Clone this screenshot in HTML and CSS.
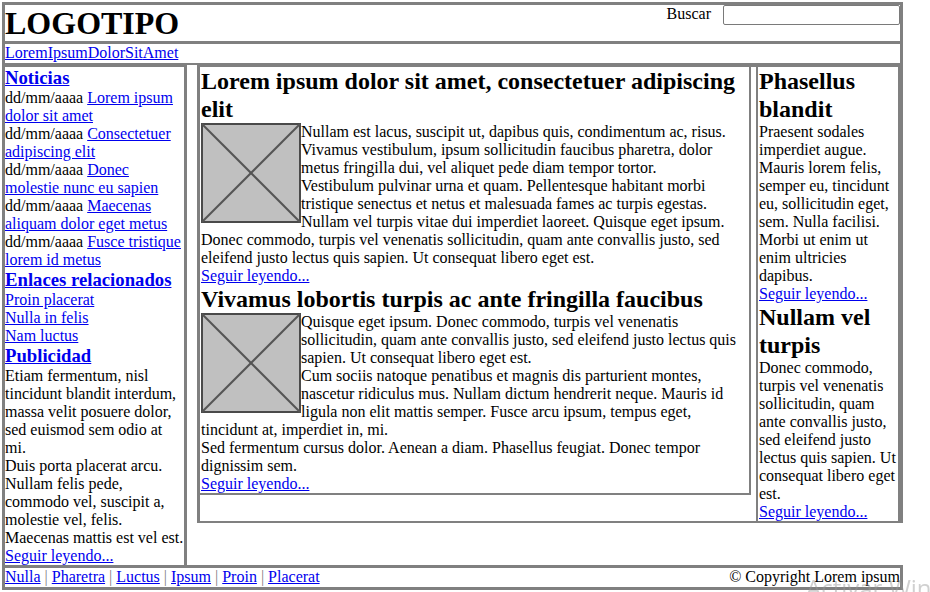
FILE: index.html
```html
<!DOCTYPE html>
<html lang="es">
<head>
    <meta charset="UTF-8">
    <meta name="viewport" content="width=device-width, initial-scale=1.0">
    <title>Logotipo</title>
    <link rel="stylesheet" href="styles.css">
</head>
<body>
    <div class="page">
        <div class="header">
            <h1>LOGOTIPO</h1>
            <div class="search">
                <label for="buscar">Buscar</label>
                <input type="text" id="buscar" name="buscar">
            </div>
        </div>
        <div class="nav"><a href="#">Lorem</a><a href="#">Ipsum</a><a href="#">Dolor</a><a href="#">Sit</a><a href="#">Amet</a></div>

        <div class="main">
            <!-- columna izquierda -->
            <div class="sidebar">
                <h3><a href="#">Noticias</a></h3>
                <div>dd/mm/aaaa <a href="#">Lorem ipsum dolor sit amet</a></div>
                <div>dd/mm/aaaa <a href="#">Consectetuer adipiscing elit</a></div>
                <div>dd/mm/aaaa <a href="#">Donec molestie nunc eu sapien</a></div>
                <div>dd/mm/aaaa <a href="#">Maecenas aliquam dolor eget metus</a></div>
                <div>dd/mm/aaaa <a href="#">Fusce tristique lorem id metus</a></div>

                <h3><a href="#">Enlaces relacionados</a></h3>
                <div><a href="#">Proin placerat</a></div>
                <div><a href="#">Nulla in felis</a></div>
                <div><a href="#">Nam luctus</a></div>

                <h3><a href="#">Publicidad</a></h3>
                <p>Etiam fermentum, nisl tincidunt blandit interdum, massa velit posuere dolor, sed euismod sem odio at mi.</p>
                <p>Duis porta placerat arcu. Nullam felis pede, commodo vel, suscipit a, molestie vel, felis. Maecenas mattis est vel est.</p>
                <a href="#">Seguir leyendo...</a>
            </div>

            <!-- contenido -->
            <div class="content">
                <div class="articles">
                    <div class="article">
                        <h2>Lorem ipsum dolor sit amet, consectetuer adipiscing elit</h2>
                        <svg class="thumb" width="100" height="100" viewBox="0 0 100 100">
                            <rect x="1" y="1" width="98" height="98" fill="#c0c0c0" stroke="#4a4a4a" stroke-width="2"/>
                            <line x1="1" y1="1" x2="99" y2="99" stroke="#555" stroke-width="2"/>
                            <line x1="99" y1="1" x2="1" y2="99" stroke="#555" stroke-width="2"/>
                        </svg>
                        <p>Nullam est lacus, suscipit ut, dapibus quis, condimentum ac, risus. Vivamus vestibulum, ipsum sollicitudin faucibus pharetra, dolor metus fringilla dui, vel aliquet pede diam tempor tortor.<br>Vestibulum pulvinar urna et quam. Pellentesque habitant morbi tristique senectus et netus et malesuada fames ac turpis egestas. Nullam vel turpis vitae dui imperdiet laoreet. Quisque eget ipsum. Donec commodo, turpis vel venenatis sollicitudin, quam ante convallis justo, sed eleifend justo lectus quis sapien. Ut consequat libero eget est.</p>
                        <a href="#">Seguir leyendo...</a>
                    </div>
                    <div class="article">
                        <h2>Vivamus lobortis turpis ac ante fringilla faucibus</h2>
                        <svg class="thumb" width="100" height="100" viewBox="0 0 100 100">
                            <rect x="1" y="1" width="98" height="98" fill="#c0c0c0" stroke="#4a4a4a" stroke-width="2"/>
                            <line x1="1" y1="1" x2="99" y2="99" stroke="#555" stroke-width="2"/>
                            <line x1="99" y1="1" x2="1" y2="99" stroke="#555" stroke-width="2"/>
                        </svg>
                        <p>Quisque eget ipsum. Donec commodo, turpis vel venenatis sollicitudin, quam ante convallis justo, sed eleifend justo lectus quis sapien. Ut consequat libero eget est.<br>Cum sociis natoque penatibus et magnis dis parturient montes, nascetur ridiculus mus. Nullam dictum hendrerit neque. Mauris id ligula non elit mattis semper. Fusce arcu ipsum, tempus eget, tincidunt at, imperdiet in, mi.<br>Sed fermentum cursus dolor. Aenean a diam. Phasellus feugiat. Donec tempor dignissim sem.</p>
                        <a href="#">Seguir leyendo...</a>
                    </div>
                </div>

                <!-- columna derecha -->
                <div class="aside">
                    <h2>Phasellus blandit</h2>
                    <p>Praesent sodales imperdiet augue. Mauris lorem felis, semper eu, tincidunt eu, sollicitudin eget, sem. Nulla facilisi. Morbi ut enim ut enim ultricies dapibus.</p>
                    <a href="#">Seguir leyendo...</a>
                    <h2>Nullam vel turpis</h2>
                    <p>Donec commodo, turpis vel venenatis sollicitudin, quam ante convallis justo, sed eleifend justo lectus quis sapien. Ut consequat libero eget est.</p>
                    <a href="#">Seguir leyendo...</a>
                </div>
            </div>
        </div>

        <div class="footer">
            <div class="footer-links">
                <a href="#">Nulla</a> <span class="sep">|</span> <a href="#">Pharetra</a> <span class="sep">|</span> <a href="#">Luctus</a> <span class="sep">|</span> <a href="#">Ipsum</a> <span class="sep">|</span> <a href="#">Proin</a> <span class="sep">|</span> <a href="#">Placerat</a>
            </div>
            <div>&copy; Copyright Lorem ipsum</div>
        </div>
    </div>

    <div class="watermark">Activar Windows</div>
</body>
</html>
```

FILE: styles.css
```css
body {
    margin: 0;
    font-family: "Liberation Serif", "Times New Roman", serif;
    font-size: 16px;
    line-height: 18px;
    color: #000;
}
a {
    color: #0000ee;
}
h1, h2, h3, p {
    margin: 0;
}
h1 {
    font-size: 32px;
    line-height: 36px;
}
h2 {
    font-size: 24px;
    line-height: 28px;
}
h3 {
    font-size: 18.72px;
    line-height: 22px;
}
.page {
    width: 901px;
    margin: 2px 0 0 2px;
}
.header {
    display: flex;
    justify-content: space-between;
    align-items: flex-start;
    border: 3px solid #808080;
}
.search {
    display: flex;
    align-items: flex-start;
    gap: 12px;
}
.search input {
    box-sizing: border-box;
    width: 177px;
    height: 20px;
    margin: 0;
    padding: 0 2px;
    border: 1px solid #7a7a7a;
    border-radius: 2px;
}
.nav {
    border: 3px solid #808080;
    border-top: 0;
    border-bottom-width: 2px;
    padding-bottom: 1px;
}
.main {
    display: flex;
    align-items: flex-start;
}
.sidebar {
    width: 179px;
    border-left: 3px solid #808080;
    border-right: 3px solid #808080;
    border-top: 2px solid #808080;
    margin-right: 10px;
}
.content {
    display: flex;
    align-items: flex-start;
    width: 701px;
    border-top: 2px solid #808080;
    border-left: 3px solid #808080;
    border-right: 2px solid #808080;
    border-bottom: 2px solid #808080;
}
.articles {
    width: 548px;
    padding-left: 1px;
    border-right: 2px solid #808080;
    border-bottom: 2px solid #808080;
}
.article {
    display: flow-root;
}
.thumb {
    float: left;
    display: block;
}
.article a {
    display: block;
    clear: both;
    width: max-content;
}
.aside {
    width: 139px;
    margin-left: 5px;
    padding-left: 1px;
    border-left: 2px solid #808080;
    border-right: 3px solid #808080;
}
.aside a {
    display: block;
    width: max-content;
}
.footer {
    display: flex;
    justify-content: space-between;
    border: 3px solid #808080;
    padding-bottom: 1px;
}
.sep {
    color: #808080;
}
.watermark {
    position: fixed;
    left: 806px;
    top: 573px;
    font-family: "Open Sans", sans-serif;
    font-size: 24px;
    line-height: 30px;
    color: rgba(150, 150, 150, 0.45);
    white-space: nowrap;
    pointer-events: none;
}
```
